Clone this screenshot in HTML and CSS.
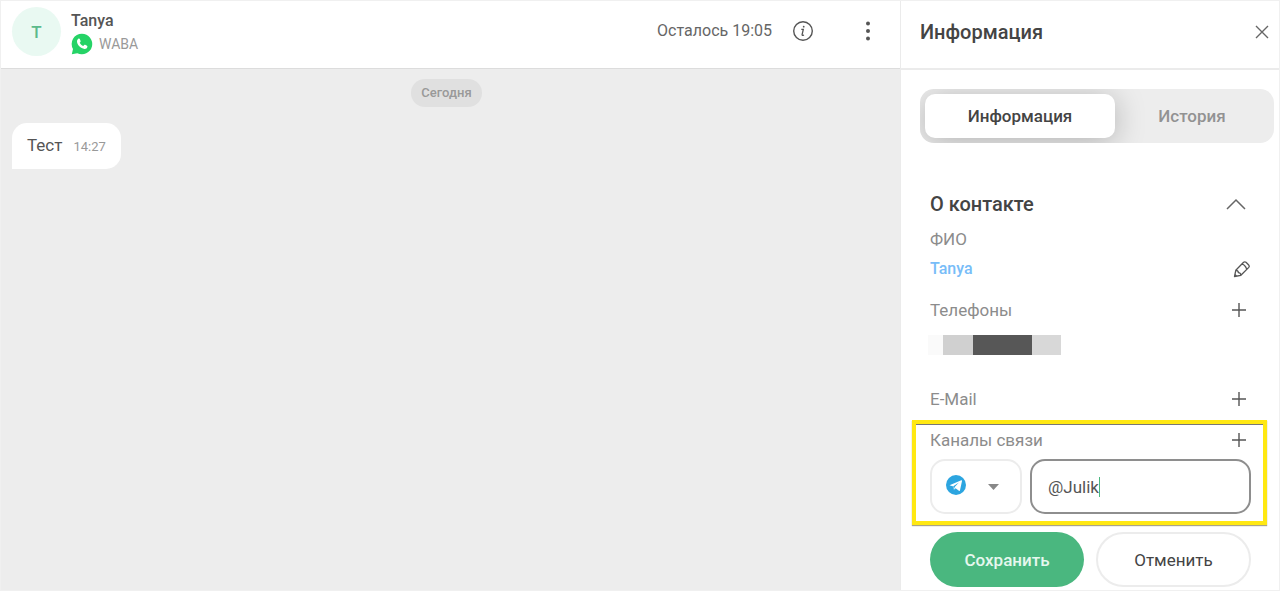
FILE: index.html
```html
<!DOCTYPE html>
<html lang="ru">
<head>
<meta charset="utf-8">
<meta name="viewport" content="width=device-width, initial-scale=1">
<title>Tanya</title>
<link rel="stylesheet" href="styles.css">
</head>
<body>
<div class="app">
  <main class="chat">
    <header class="chat-header">
      <div class="avatar">T</div>
      <div class="person">
        <div class="person-name">Tanya</div>
        <div class="person-channel">
          <svg width="22" height="22" viewBox="0 0 22 22" aria-hidden="true">
            <path fill="#25d366" d="M11 .7a10.3 10.3 0 1 1-4.7 19.5L.8 21.3l1.2-5.2A10.3 10.3 0 0 1 11 .7z"/>
            <path fill="#fff" d="M7.7 5.600c.5-.2.9 0 1.100.5l.8 1.800c.1.4 0 .7-.2 1l-.7.8c.8 1.600 2 2.700 3.600 3.400l.9-1.100c.3-.3.6-.4 1-.2l1.800.9c.4.2.5.5.4 1-.3 1.500-1.500 2.300-2.900 2.200-3.900-.4-7.400-4-7.500-7.400 0-1.300.7-2.400 1.700-2.900z"/>
          </svg>
          <span>WABA</span>
        </div>
      </div>
      <div class="time-left">Осталось 19:05</div>
      <button class="icon-button info-button" aria-label="Сведения">
        <svg width="22" height="22" viewBox="0 0 22 22" fill="none" stroke="#555">
          <circle cx="11" cy="11" r="9.300" stroke-width="1.400"/>
          <path d="M9.300 9.400h2l-1.200 5.200q-.1 1 1 .8l.9-.4" stroke-width="1.300"/>
          <circle cx="11.700" cy="6.700" r=".9" fill="#555" stroke="none"/>
        </svg>
      </button>
      <button class="icon-button menu-button" aria-label="Меню">
        <svg width="22" height="22" viewBox="0 0 22 22" fill="#555">
          <circle cx="11" cy="3.500" r="2"/><circle cx="11" cy="11" r="2"/><circle cx="11" cy="18.500" r="2"/>
        </svg>
      </button>
    </header>
    <section class="messages">
      <div class="day">Сегодня</div>
      <div class="message"><span>Тест</span><time>14:27</time></div>
    </section>
  </main>

  <aside class="panel">
    <header class="panel-header">
      <h1>Информация</h1>
      <button class="icon-button" aria-label="Закрыть">
        <svg width="14" height="14" viewBox="0 0 14 14" fill="none" stroke="#666" stroke-width="1.400"><path d="M1 1l12 12M13 1L1 13"/></svg>
      </button>
    </header>
    <div class="tabs" role="tablist">
      <button class="tab tab-active" role="tab" aria-selected="true">Информация</button>
      <button class="tab" role="tab" aria-selected="false">История</button>
    </div>
    <form class="contact">
      <div class="row row-title">
        <h2>О контакте</h2>
        <button type="button" class="icon-button chevron" aria-label="Свернуть">
          <svg width="20" height="12" viewBox="0 0 20 12" fill="none" stroke="#666" stroke-width="1.500"><path d="M1 11l9-9 9 9"/></svg>
        </button>
      </div>
      <div class="row row-label">ФИО</div>
      <div class="row row-name">
        <a class="name-link" href="#">Tanya</a>
        <button type="button" class="icon-button" aria-label="Изменить">
          <svg width="18" height="18" viewBox="0 0 18 18" fill="none" stroke="#555" stroke-width="1.300" stroke-linejoin="round"><path d="M1.500 16.500l1.300-6.200 7.800-8q1.200-1 2.400 0l2.700 2.700q1.200 1.200.1 2.400l-7.900 7.900zM2.800 10.300q2.300-.2 2.600 2.300 2.400.2 2.500 2.700M8.900 4.200q2.800.2 4.900 5M1.500 16.500l.5-2 1.600 1.600z"/></svg>
        </button>
      </div>
      <div class="row row-field">
        <span>Телефоны</span>
        <button type="button" class="icon-button plus" aria-label="Добавить телефон">
          <svg width="14" height="14" viewBox="0 0 14 14" fill="none" stroke="#555" stroke-width="1.400"><path d="M7 0v14M0 7h14"/></svg>
        </button>
      </div>
      <div class="masked-phone"><i class="mask-edge"></i><i class="mask-light"></i><i class="mask-dark"></i><i class="mask-pale"></i></div>
      <div class="row row-field">
        <span>E-Mail</span>
        <button type="button" class="icon-button plus" aria-label="Добавить E-Mail">
          <svg width="14" height="14" viewBox="0 0 14 14" fill="none" stroke="#555" stroke-width="1.400"><path d="M7 0v14M0 7h14"/></svg>
        </button>
      </div>
      <div class="channels">
        <div class="row row-channels">
          <label for="channel-name">Каналы связи</label>
          <button type="button" class="icon-button plus" aria-label="Добавить канал">
            <svg width="14" height="14" viewBox="0 0 14 14" fill="none" stroke="#555" stroke-width="1.400"><path d="M7 0v14M0 7h14"/></svg>
          </button>
        </div>
        <div class="channel-fields">
          <div class="channel-type">
            <select aria-label="Тип канала"><option value="telegram" aria-label="Telegram"></option></select>
            <div class="channel-icons">
              <svg width="20" height="20" viewBox="0 0 20 20" aria-hidden="true"><circle cx="10" cy="10" r="10" fill="#2ca5e0"/><path fill="#fff" d="M3.500 10.200L15.300 5.200q.8-.2.700.8l-2 9.300q-.3.900-1.100.4l-3.300-2.500-1.700 1.600-.5-3.300z"/><path fill="#2ca5e0" d="M7.300 11.300l5.600-3.700-4.200 4.500-.6 1.800z"/></svg>
              <svg width="12" height="6" viewBox="0 0 12 6" aria-hidden="true"><path fill="#888" d="M0 0h11L5.500 6z"/></svg>
            </div>
          </div>
          <div class="channel-input">
            <input id="channel-name" type="text" value="@Julik" size="4">
            <i class="caret"></i>
          </div>
        </div>
      </div>
      <div class="actions">
        <button type="submit" class="button button-save">Сохранить</button>
        <button type="button" class="button button-cancel">Отменить</button>
      </div>
    </form>
  </aside>
</div>
</body>
</html>
```
FILE: styles.css
```css
* { box-sizing: border-box; }

body {
  margin: 0;
  font-family: Roboto, "Liberation Sans", sans-serif;
  font-size: 17px;
  line-height: 20px;
  color: #555;
  background: #fff;
}

button, input, select { font: inherit; color: inherit; }

h1, h2 { margin: 0; font-size: 20px; font-weight: 500; color: #444; }

.app {
  display: grid;
  grid-template-columns: 1fr 379px;
  min-height: 100vh;
  border: 1px solid #f0f0f0;
}

.icon-button {
  display: flex;
  padding: 0;
  border: 0;
  background: none;
  cursor: pointer;
}

.chat { display: flex; flex-direction: column; }

.chat-header {
  display: flex;
  align-items: center;
  height: 68px;
  padding: 0 21px 8px 11px;
  border-bottom: 1px solid #dcdcdc;
}

.avatar {
  display: grid;
  place-items: center;
  width: 49px;
  height: 49px;
  margin-top: 2px;
  border-radius: 50%;
  background: #e9f9f2;
  color: #5cba8b;
  font-weight: 500;
}

.person { flex: 1; padding: 4px 0 0 10px; }
.person-name { font-weight: 500; font-size: 16px; }

.person-channel {
  display: flex;
  align-items: center;
  gap: 6px;
  padding-top: 2px;
  font-size: 14px;
  color: #999;
}

.time-left { font-size: 16px; color: #666; }
.info-button { margin-left: 20px; }
.menu-button { margin-left: 43px; }

.messages {
  flex: 1;
  display: flex;
  flex-direction: column;
  align-items: flex-start;
  gap: 16px;
  padding: 10px 19px 10px 11px;
  background: #ededed;
}

.day {
  align-self: center;
  padding: 4px 10px;
  border-radius: 14px;
  background: #e0e0e0;
  color: #999;
  font-size: 13px;
  font-weight: 500;
}

.message {
  display: flex;
  align-items: baseline;
  gap: 11px;
  padding: 12px 15px;
  border-radius: 15px 15px 15px 0;
  background: #fff;
}

.message time { font-size: 13px; color: #999; }

.panel { border-left: 1px solid #ebebeb; }

.panel-header {
  display: flex;
  align-items: center;
  justify-content: space-between;
  height: 69px;
  padding: 0 10px 6px 19px;
  border-bottom: 2px solid #ebebeb;
}

.panel-header h1 { color: #444; }

.tabs {
  display: grid;
  grid-template-columns: 190px 1fr;
  margin: 19px 5px 0 19px;
  padding: 5px;
  border-radius: 14px;
  background: #ededed;
  overflow: hidden;
}

.tab {
  height: 44px;
  padding: 0;
  border: 0;
  border-radius: 10px;
  background: none;
  color: #929292;
  font-weight: 500;
}

.tab-active {
  background: #fff;
  color: #444;
  box-shadow: 0 4px 30px rgba(0, 0, 0, 0.25);
}

.contact { padding: 44px 28px 0 29px; }

.row {
  display: flex;
  align-items: center;
  justify-content: space-between;
}

.row-title { height: 34px; }
.chevron { margin-right: 5px; }
.row-label { height: 36px; color: #8c8c8c; }
.row-name { height: 24px; }
.name-link { color: #78bdf8; font-size: 16px; font-weight: 500; text-decoration: none; }
.row-field { height: 22px; margin-top: 18px; color: #8c8c8c; }
.plus { margin-right: 5px; }

.masked-phone { display: flex; height: 20px; margin: 14px 0 33px -2px; }
.mask-edge { width: 15px; background: #fafafa; }
.mask-light { width: 30px; background: #d0d0d0; }
.mask-dark { width: 59px; background: #575757; }
.mask-pale { width: 29px; background: #d8d8d8; }

.channels {
  margin: 10px -16px 0 -18px;
  padding: 5px 12px 7px 14px;
  border: 4px solid #ffe812;
  box-shadow: 0 1px 1px #a9a48a, inset 0 1px 0 #777;
}

.row-channels { height: 22px; color: #8c8c8c; }

.channel-fields {
  display: grid;
  grid-template-columns: 92px 1fr;
  gap: 8px;
  margin-top: 8px;
}

.channel-type { position: relative; }

.channel-type select {
  width: 100%;
  height: 55px;
  appearance: none;
  border: 2px solid #ececec;
  border-radius: 15px;
  background: #fff;
}

.channel-icons {
  position: absolute;
  inset: 0 20px 4px 16px;
  display: flex;
  align-items: center;
  gap: 22px;
  pointer-events: none;
}

.channel-icons svg + svg { margin-top: 5px; }

.channel-input {
  display: flex;
  align-items: center;
  height: 55px;
  padding: 0 16px;
  border: 2px solid #8e8e8e;
  border-radius: 15px;
}

.channel-input input {
  field-sizing: content;
  padding: 0;
  border: 0;
  outline: 0;
  background: none;
}

.caret { width: 1px; height: 20px; background: #4ab77f; }

.actions {
  display: grid;
  grid-template-columns: 154px 1fr;
  gap: 12px;
  margin-top: 7px;
}

.button { height: 55px; padding: 0; border: 0; border-radius: 28px; font-weight: 500; }
.button-save { background: #4ab77f; color: #e6f7ee; }
.button-cancel { background: #fff; border: 2px solid #ececec; font-weight: 400; color: #444; }
```
